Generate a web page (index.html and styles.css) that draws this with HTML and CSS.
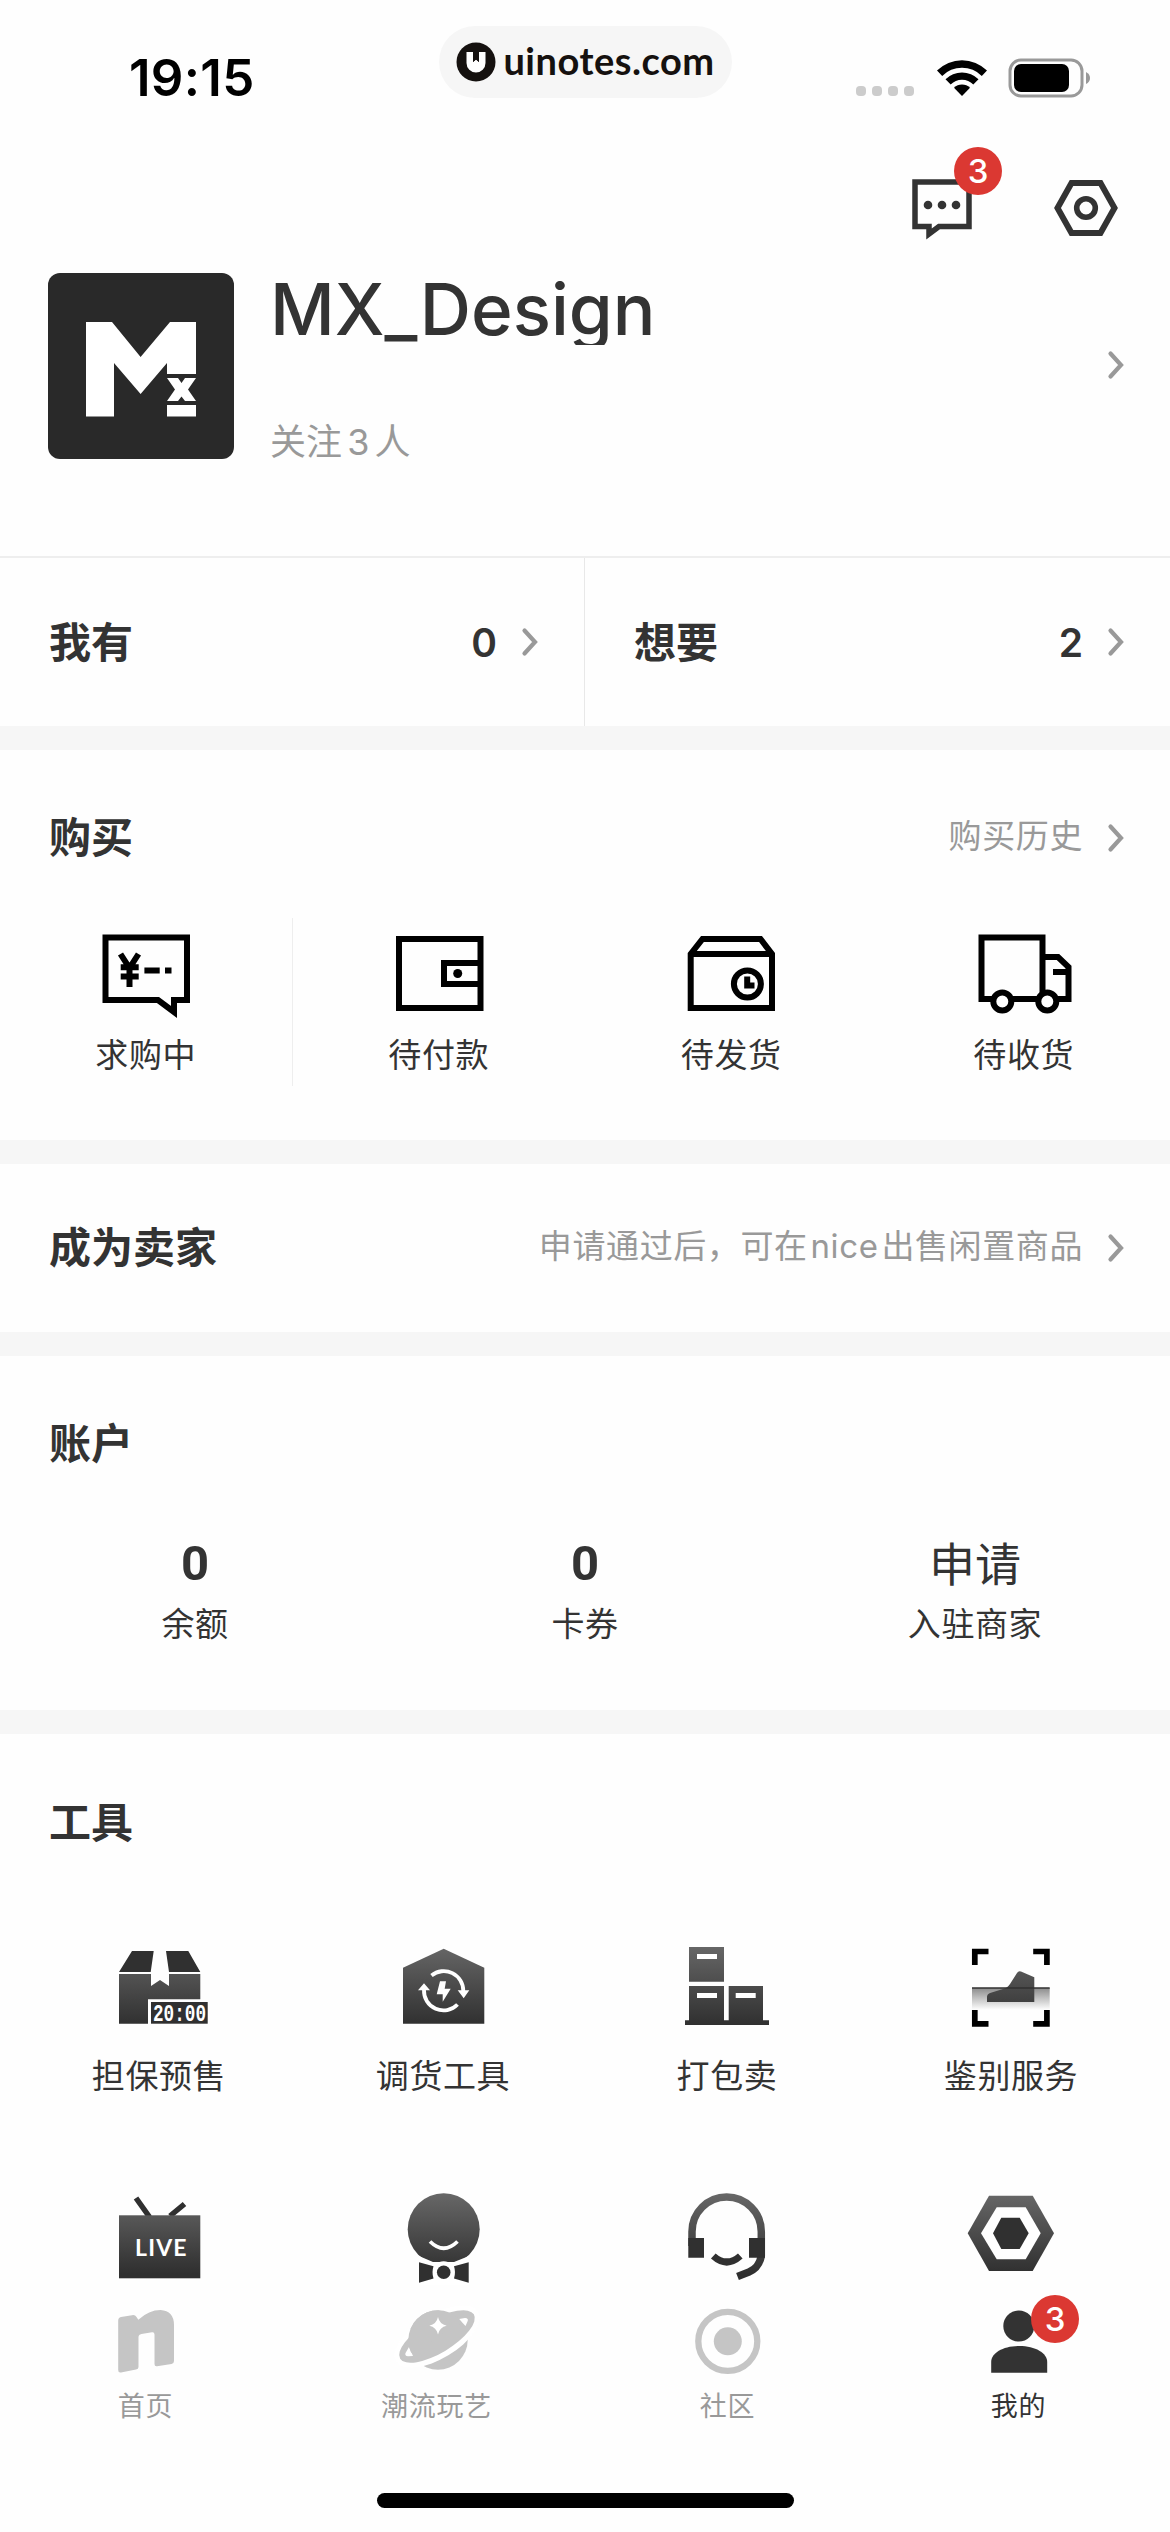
FILE: index.html
```html
<!DOCTYPE html>
<html lang="zh-CN">
<head>
    <meta charset="UTF-8">
    <meta name="viewport" content="width=device-width, initial-scale=1.0">
    <title>我的</title>
    <link rel="stylesheet" href="styles.css">
</head>
<body>

<svg class="defs" width="0" height="0">
    <defs>
        <linearGradient id="dark" gradientUnits="userSpaceOnUse" x1="0" y1="9" x2="0" y2="88">
            <stop offset="0" stop-color="#666"/>
            <stop offset="1" stop-color="#2f2f2f"/>
        </linearGradient>
        <linearGradient id="scan" x1="0" y1="0" x2="0" y2="1">
            <stop offset="0" stop-color="#8c8c8c"/>
            <stop offset="1" stop-color="#fff"/>
        </linearGradient>
        <symbol id="chevron" viewBox="0 0 18 30">
            <path d="M3.5 3.5L14 15L3.5 26.5" fill="none" stroke="#999" stroke-width="4.2" stroke-linecap="round"/>
        </symbol>
    </defs>
</svg>

<header class="status">
    <div class="time">19:15</div>
    <div class="site">
        <svg width="40" height="40" viewBox="0 0 40 40">
            <circle cx="20" cy="20" r="19.5" fill="#15110f"/>
            <path d="M10.5 10h6.5v10l3-2.5 3 2.5V10h6.5v11a9.5 9.5 0 0 1-19 0z" fill="#fff"/>
            <path d="M17 9h6v11l-3-2.5-3 2.5z" fill="#15110f"/>
        </svg>
        <span>uinotes.com</span>
    </div>
    <div class="signals">
        <div class="dots"><i></i><i></i><i></i><i></i></div>
        <svg width="50" height="38" viewBox="0 0 50 38">
            <path d="M0 12.5A35.500 35.500 0 0 1 50 12.500L44.800 18A27.800 27.800 0 0 0 5.200 18Z"/>
            <path d="M8.500 21.300A23.500 23.500 0 0 1 41.500 21.300L36.300 26.500A16 16 0 0 0 13.700 26.500Z"/>
            <path d="M17 29.800A11.500 11.500 0 0 1 33 29.800L25 38Z"/>
        </svg>
        <svg width="84" height="40" viewBox="0 0 84 40">
            <rect x="2" y="2" width="72" height="36" rx="11" fill="none" stroke="#999" stroke-width="3"/>
            <rect x="6" y="6" width="55" height="28" rx="7"/>
            <path d="M78 14q4 2 4 6t-4 6z" fill="#999"/>
        </svg>
    </div>
</header>

<nav class="actions">
    <div class="message">
        <svg width="60" height="60" viewBox="0 0 60 60">
            <path d="M3 3H57V47.500H27L17 55V47.500H3Z" fill="none" stroke="#333" stroke-width="5.500"/>
            <circle cx="16" cy="26" r="4.300" fill="#333"/>
            <circle cx="30" cy="26" r="4.300" fill="#333"/>
            <circle cx="44" cy="26" r="4.300" fill="#333"/>
        </svg>
        <span class="badge">3</span>
    </div>
    <svg width="64" height="58" viewBox="0 0 64 58">
        <path d="M17.500 4H46.500L60.500 29L46.500 54H17.500L3.500 29Z" fill="none" stroke="#333" stroke-width="6"/>
        <circle cx="32" cy="29" r="9.300" fill="none" stroke="#333" stroke-width="5.600"/>
    </svg>
</nav>

<section class="profile">
    <svg class="avatar" width="186" height="186" viewBox="0 0 186 186">
        <rect width="186" height="186" rx="12" fill="#292929"/>
        <path d="M38 49H64L92.600 84L122 49H148V101H119V90L92.600 121L66 90V143.500H38Z" fill="#fff"/>
        <path d="M119 105H130L133.500 110L137 105H148L140 116.500L148 128H137L133.500 123.500L130 128H119L127 116.500Z" fill="#fff"/>
        <path d="M119 132H148V143.500H119Z" fill="#fff"/>
    </svg>
    <div class="who">
        <h1>MX_Design</h1>
        <p>关注 3 人</p>
    </div>
    <svg class="chevron"><use href="#chevron"/></svg>
</section>

<section class="owned">
    <div class="line">
        <h2>我有</h2>
        <b>0</b>
        <svg class="chevron"><use href="#chevron"/></svg>
    </div>
    <div class="line">
        <h2>想要</h2>
        <b>2</b>
        <svg class="chevron"><use href="#chevron"/></svg>
    </div>
</section>

<section class="buy">
    <div class="line">
        <h2>购买</h2>
        <span>购买历史</span>
        <svg class="chevron"><use href="#chevron"/></svg>
    </div>
    <div class="orders">
        <div class="item">
            <svg class="outline" width="96" height="96" viewBox="0 0 96 96">
                <path d="M7.500 13.500H89V76H76V88L60 76H7.500Z"/>
                <path d="M22.500 30L31.500 44L40.500 30M31.500 43V63M22.700 43.300H40.700M22.700 52.500H40.700M46.400 46.400H61.700M67 46.400H73.500"/>
            </svg>
            <span>求购中</span>
        </div>
        <div class="item">
            <svg class="outline" width="96" height="96" viewBox="0 0 96 96">
                <path d="M8 15H89.500V84H8ZM89.500 39H53V60H89.500"/>
                <circle class="solid" cx="66.700" cy="49.500" r="4.500"/>
            </svg>
            <span>待付款</span>
        </div>
        <div class="item">
            <svg class="outline" width="96" height="96" viewBox="0 0 96 96">
                <path d="M7.700 84H89V30L77.500 15H19.500L7.700 30ZM7.700 30H89"/>
                <circle cx="64.400" cy="60" r="13.500"/>
                <path d="M64.200 52.500V61.500H71.500"/>
            </svg>
            <span>待发货</span>
        </div>
        <div class="item">
            <svg class="outline" width="96" height="96" viewBox="0 0 96 96">
                <path d="M66.500 75H5.500V13.500H66.500V75H92.500V43L82 33H66.500M77 48H92.500"/>
                <circle class="wheel" cx="26.300" cy="77.500" r="9"/>
                <circle class="wheel" cx="71.300" cy="77.500" r="9"/>
            </svg>
            <span>待收货</span>
        </div>
    </div>
</section>

<section class="seller">
    <div class="line">
        <h2>成为卖家</h2>
        <span>申请通过后，可在 nice 出售闲置商品</span>
        <svg class="chevron"><use href="#chevron"/></svg>
    </div>
</section>

<section class="account">
    <div class="line"><h2>账户</h2></div>
    <div class="totals">
        <div class="item"><b>0</b><span>余额</span></div>
        <div class="item"><b>0</b><span>卡券</span></div>
        <div class="item"><em>申请</em><span>入驻商家</span></div>
    </div>
</section>

<section class="tools">
    <div class="line"><h2>工具</h2></div>
    <div class="grid">
        <div class="item">
            <svg class="dark" width="96" height="96" viewBox="0 0 96 96">
                <path d="M21 13H42.700L39.700 34H8ZM55 13H77.300L89.300 34H58Z" fill="#303030"/>
                <path d="M8 36H40V48L49 42L58 48V36H89.300V61.300H37V85.700H8Z"/>
                <rect x="40" y="64" width="56.700" height="21.700" fill="#303030"/>
                <text class="clock" x="42" y="82.500" textLength="53" lengthAdjust="spacingAndGlyphs">20:00</text>
            </svg>
            <span>担保预售</span>
        </div>
        <div class="item">
            <svg class="dark" width="96" height="96" viewBox="0 0 96 96">
                <path d="M48.700 10.700L89.300 29.700V85.700H8V29.700Z"/>
                <path d="M36.500 37.500A19.500 19.500 0 0 1 68.300 53M62.500 66.500A19.500 19.500 0 0 1 29 52" fill="none" stroke="#fff" stroke-width="3.800"/>
                <path d="M62.700 52.300H74.300L68.700 60.300ZM23 52.300H35L29 45.300Z" fill="#fff"/>
                <path d="M45 43.300H51L49.700 50.700H55.700L47.700 63.700V56.300H41.700Z" fill="#fff"/>
            </svg>
            <span>调货工具</span>
        </div>
        <div class="item">
            <svg class="dark" width="96" height="96" viewBox="0 0 96 96">
                <path d="M10 9H45V43.700H10ZM10 48H45V82.300H49.700V48H84V82.300H90V87H6V82.300H10Z"/>
                <path d="M18 16H38V21H18ZM18 55H38V60H18ZM56.700 55H76.700V60H56.700Z" fill="#fff"/>
            </svg>
            <span>打包卖</span>
        </div>
        <div class="item">
            <svg class="dark" width="96" height="96" viewBox="0 0 96 96">
                <rect x="9" y="50" width="77.700" height="22" fill="url(#scan)"/>
                <path d="M24 64V59Q24 56 27 55L40 51Q44.500 50 47 46L54 35Q55.500 32.500 58 33.500L71.300 39.300V64Z"/>
                <path d="M9 49.300H86.700V50.800H9Z" fill="#303030"/>
                <path d="M11.800 27V13.500H25.500M70.200 13.500H83.900V27M83.900 72V85.900H70.200M25.500 85.900H11.800V72" fill="none" stroke="#000" stroke-width="5.700"/>
            </svg>
            <span>鉴别服务</span>
        </div>
        <div class="item">
            <svg class="dark" width="96" height="96" viewBox="0 0 96 96">
                <path d="M25 12L38.500 31M73.500 18L59 30" stroke="#303030" stroke-width="5.500"/>
                <rect x="8" y="29.300" width="81.300" height="63"/>
                <text class="live" x="24" y="70.300">LIVE</text>
            </svg>
        </div>
        <div class="item">
            <svg class="dark" width="96" height="96" viewBox="0 0 96 96">
                <circle cx="48.700" cy="43.300" r="36"/>
                <path d="M24 70L38 76H59L74 70V99H24Z" fill="#fff"/>
                <circle cx="48.700" cy="86.300" r="11" fill="#fff"/>
                <path d="M35 55.500Q48.700 69 62.500 55.500" fill="none" stroke="#fff" stroke-width="3.700"/>
                <path d="M24 76.300L38.500 80.300Q36.500 86.500 38.500 92.500L24 96.700ZM73.700 76.300L59 80.300Q61 86.500 59 92.500L73.700 96.700Z" fill="#303030"/>
                <circle cx="48.700" cy="86.300" r="6.800" fill="#303030"/>
            </svg>
        </div>
        <div class="item">
            <svg class="dark" width="96" height="96" viewBox="0 0 96 96">
                <path d="M13 60V45.700A34.600 34.600 0 0 1 82.300 45.700V70Q80 82 70 86L58.500 90.500" fill="none" stroke="url(#dark)" stroke-width="7.500"/>
                <path d="M9.300 52H25V71.700H9.300ZM70 52H86V71.700H70Z" fill="#303030"/>
                <path d="M34.300 70Q47.700 82 61.300 70" fill="none" stroke="#303030" stroke-width="7"/>
            </svg>
        </div>
        <div class="item">
            <svg class="dark" width="96" height="96" viewBox="0 0 96 96">
                <path d="M4.700 47.300L26 9.700H69.700L91 47.300L69.700 85H26Z"/>
                <path d="M18 47.300L33.700 21.300H62.700L77.700 47.300L62.700 73.300H33.700Z" fill="#fff"/>
                <path d="M30 47.300L38.300 31.700H56.700L65.700 47.300L56.700 63H38.300Z" fill="#303030"/>
            </svg>
        </div>
    </div>
</section>

<footer class="tabbar">
    <div class="tabs">
        <div class="tab">
            <svg width="84" height="72" viewBox="0 0 84 72">
                <path d="M14.200 16.500Q14.200 13.500 17 13L28 11.200Q31 10.500 32.500 13L34.300 15.700Q45 6 56.500 6Q70 7 70 21V57Q70 59.500 67.500 60L53 62.300Q50.500 62.700 50.500 60V30.500Q50.500 28 48 28.300L37.500 30Q34.500 30.500 34.500 33V63Q34.500 65 32 65.500L17 68.500Q14.200 69 14.200 66Z"/>
            </svg>
            <span>首页</span>
        </div>
        <div class="tab">
            <svg width="84" height="72" viewBox="0 0 84 72">
                <clipPath id="top"><path d="M0 -20H84V8L0 59Z"/></clipPath>
                <circle cx="43" cy="36" r="29.700"/>
                <ellipse cx="42" cy="32.500" rx="48" ry="22" transform="rotate(-31 42 32.500)" fill="#fff"/>
                <ellipse cx="42" cy="32.500" rx="43" ry="16.500" transform="rotate(-31 42 32.500)"/>
                <path d="M14 43L10.500 49Q9.500 52 13 52.300L18 52ZM64 15L70 14Q74 14 72.500 17.500L70.500 22Z" fill="#fff"/>
                <circle cx="43" cy="36" r="29.700" clip-path="url(#top)"/>
                <path d="M43 13Q44.500 20.200 51.700 21.700Q44.500 23.200 43 30.400Q41.500 23.200 34.300 21.700Q41.500 20.200 43 13Z" fill="#fff"/>
            </svg>
            <span>潮流玩艺</span>
        </div>
        <div class="tab">
            <svg width="84" height="72" viewBox="0 0 84 72">
                <circle cx="41.800" cy="37.300" r="29.500" fill="none" stroke="#c5c5c5" stroke-width="6.300"/>
                <circle cx="41.800" cy="37.300" r="14"/>
            </svg>
            <span>社区</span>
        </div>
        <div class="tab active">
            <svg width="84" height="72" viewBox="0 0 84 72">
                <circle cx="41.800" cy="22" r="15.500"/>
                <path d="M14.200 68.700V58C14.200 49 26 42 42.200 42S70.200 49 70.200 58V68.700Z"/>
            </svg>
            <b class="badge">3</b>
            <span>我的</span>
        </div>
    </div>
    <div class="home-bar"></div>
</footer>

</body>
</html>
```
FILE: styles.css
```css
* {
    box-sizing: border-box;
    margin: 0;
    padding: 0;
}
body {
    width: 1170px;
    height: 2532px;
    overflow: hidden;
    display: flex;
    flex-direction: column;
    background-color: #fefefe;
    color: #333;
    font-family: Inter, "Noto Sans CJK SC", sans-serif;
}
svg {
    display: block;
    flex: none;
    overflow: visible;
}
.defs {
    position: absolute;
}
section {
    flex: none;
}

/* status bar */
.status {
    flex: none;
    height: 147px;
    padding: 26px 78px 0 129px;
    display: grid;
    grid-template-columns: 310px 293px 1fr;
    align-items: start;
    color: #000;
}
.time {
    padding-top: 21px;
    font-size: 51px;
    line-height: 62px;
    font-weight: 600;
    letter-spacing: 0.3px;
}
.site {
    height: 72px;
    border-radius: 36px;
    background-color: #f6f6f6;
    display: flex;
    align-items: center;
    justify-content: center;
    gap: 7px;
    color: #15110f;
    font-family: Lato, sans-serif;
    font-size: 38px;
    line-height: 66px;
    font-weight: 700;
    letter-spacing: 0.5px;
}
.site span {
    padding-bottom: 4px;
}
.signals {
    display: flex;
    justify-content: flex-end;
    padding-top: 32px;
}
.dots {
    display: flex;
    gap: 6px;
    margin: 28px 23px 0 0;
}
.dots i {
    width: 10px;
    height: 10px;
    border-radius: 4px;
    background-color: #ccc;
}
.signals svg + svg {
    margin-left: 21px;
}

/* message and settings */
.actions {
    flex: none;
    height: 126px;
    padding: 32px 52px 0 0;
    display: flex;
    justify-content: flex-end;
    gap: 82px;
}
.message {
    position: relative;
}
.badge {
    position: absolute;
    width: 48px;
    height: 48px;
    border-radius: 50%;
    background-color: #db3832;
    color: #fff;
    font-size: 33px;
    line-height: 48px;
    font-weight: 500;
    text-align: center;
}
.message .badge {
    left: 42px;
    top: -32px;
}

/* profile */
.profile {
    height: 285px;
    padding: 0 45px 0 48px;
    display: flex;
    border-bottom: 2px solid #eee;
}
.who {
    flex: 1;
    padding-left: 36px;
}
.who h1 {
    height: 72px;
    overflow: hidden;
    font-size: 71px;
    line-height: 73px;
    font-weight: 500;
}
.who p {
    margin-top: 73px;
    font-size: 36px;
    line-height: 48px;
    word-spacing: -5px;
    color: #999;
}
.chevron {
    width: 18px;
    height: 30px;
}
.profile .chevron {
    margin-top: 77px;
}

/* title rows */
.line {
    display: flex;
    align-items: center;
    padding: 0 45px 0 49px;
}
.line h2 {
    flex: 1;
    padding-top: 1px;
    font-size: 42px;
    line-height: 60px;
    font-weight: 600;
}
.line b {
    font-size: 39px;
    font-weight: 600;
}
.line span {
    padding-bottom: 4px;
    font-size: 33px;
    line-height: 48px;
    letter-spacing: 0.6px;
    word-spacing: -7px;
    color: #999;
}
.line .chevron {
    margin-left: 24px;
}
.owned {
    height: 192px;
    display: flex;
    border-bottom: 24px solid #f6f6f6;
}
.owned .line {
    width: 585px;
}
.owned .line:first-child {
    border-right: 1px solid #e8e8e8;
}

/* icon with a caption */
.item {
    display: flex;
    flex-direction: column;
    align-items: center;
    font-size: 33px;
    line-height: 48px;
    letter-spacing: 0.6px;
}
.outline {
    fill: none;
    stroke: #000;
    stroke-width: 6;
}
.outline .solid {
    fill: #000;
    stroke: none;
}
.outline .wheel {
    fill: #fff;
}
.dark {
    fill: url(#dark);
}

/* orders */
.buy {
    height: 414px;
    padding-top: 57px;
    border-bottom: 24px solid #f6f6f6;
}
.orders {
    margin-top: 50px;
    display: grid;
    grid-template-columns: repeat(4, 1fr);
}
.orders .item {
    height: 168px;
    padding-top: 6px;
    gap: 11px;
}
.orders .item:first-child {
    border-right: 1px solid #eee;
}
.seller {
    height: 192px;
    padding-top: 53px;
    border-bottom: 24px solid #f6f6f6;
}

/* account */
.account {
    height: 378px;
    padding-top: 57px;
    border-bottom: 24px solid #f6f6f6;
}
.totals {
    margin-top: 60px;
    display: grid;
    grid-template-columns: repeat(3, 1fr);
}
.totals b,
.totals em {
    height: 66px;
    font-size: 46px;
    line-height: 60px;
    font-style: normal;
    letter-spacing: 0;
}
.totals b {
    font-family: Roboto, sans-serif;
    font-size: 49px;
}

/* tools */
.tools {
    height: 556px;
    padding-top: 58px;
    overflow: hidden;
}
.grid {
    margin-top: 85px;
    padding: 0 17px;
    display: grid;
    grid-template-columns: repeat(4, 1fr);
    grid-auto-rows: 248px;
}
.grid .item {
    gap: 18px;
}
.clock {
    fill: #fff;
    font-family: "Liberation Mono", monospace;
    font-size: 23px;
    font-weight: bold;
    letter-spacing: 0;
}
.live {
    fill: #fff;
    font-family: Lato, sans-serif;
    font-size: 23px;
    font-weight: 700;
    letter-spacing: 1.2px;
}

/* bottom tabs */
.tabbar {
    flex: none;
    height: 242px;
    padding-top: 14px;
}
.tabs {
    width: 1164px;
    height: 189px;
    display: grid;
    grid-template-columns: repeat(4, 1fr);
}
.tab {
    position: relative;
    display: flex;
    flex-direction: column;
    align-items: center;
    gap: 11px;
    fill: #c5c5c5;
    color: #999;
    font-size: 27px;
    line-height: 40px;
    letter-spacing: 0.8px;
}
.tab.active {
    fill: #333;
    color: #333;
}
.tab .badge {
    left: 158px;
    top: -9px;
    letter-spacing: 0;
}
.home-bar {
    width: 417px;
    height: 15px;
    margin: 0 auto;
    border-radius: 8px;
    background-color: #000;
}
```
